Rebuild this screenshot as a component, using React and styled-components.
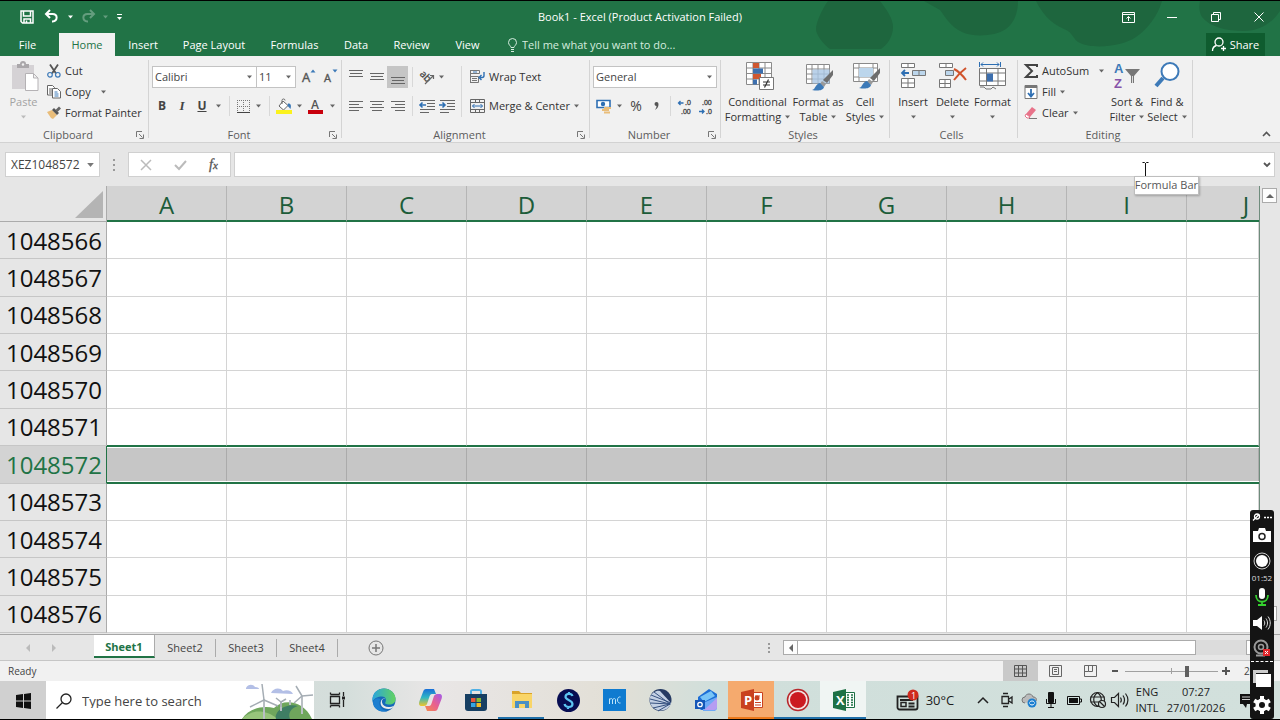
import { Fragment } from "react";
import styled, { createGlobalStyle, css } from "styled-components";

const GlobalStyle = createGlobalStyle`
  * {
    box-sizing: border-box;
  }
  body {
    margin: 0;
    background: #000;
    color: #444;
    font-family: "Open Sans", "Noto Sans", sans-serif;
    font-size: 11px;
    line-height: 14px;
  }
  button,
  input,
  select {
    margin: 0;
    padding: 0;
    border: 0;
    background: none;
    color: inherit;
    font: inherit;
    outline: none;
  }
  svg {
    display: block;
    flex: none;
    overflow: visible;
  }
`;

const Window = styled.div`
  position: relative;
  display: flex;
  flex-direction: column;
  min-height: 100vh;
  padding: 1px 0;
  overflow: hidden;
`;

/* ---------- title bar ---------- */

const Header = styled.header`
  position: relative;
  background: #217346;
  color: #fff;
`;

const Blots = styled.svg`
  position: absolute;
  top: 0;
  right: 0;
  overflow: hidden;
`;

const TitleBar = styled.div`
  position: relative;
  display: grid;
  grid-template-columns: 1fr auto 1fr;
  align-items: center;
  height: 32px;
`;

const QuickAccess = styled.div`
  display: flex;
  align-items: center;
  gap: 5px;
  padding-left: 20px;
`;

const PlainButton = styled.button`
  display: flex;
  align-items: center;
  justify-content: center;
  width: ${({ $w }) => ($w ? `${$w}px` : "auto")};
  height: ${({ $h = 22 }) => $h}px;
  opacity: ${({ $dim }) => ($dim ? 0.3 : 1)};
`;

const Title = styled.h1`
  margin: 0;
  font-size: 11px;
  font-weight: 400;
`;

const WindowButtons = styled.div`
  display: flex;
  justify-content: flex-end;
`;

const TabRow = styled.nav`
  position: relative;
  display: flex;
  height: 23px;
`;

const Tab = styled.button`
  width: ${({ $w }) => $w}px;
  height: 23px;
  margin: 0 ${({ $active }) => ($active ? 4 : 0)}px;
  background: ${({ $active }) => ($active ? "#f1f1f1" : "transparent")};
  color: ${({ $active }) => ($active ? "#217346" : "#fff")};
`;

const TellMe = styled.label`
  display: flex;
  align-items: center;
  gap: 5px;
  margin-left: 12px;
  color: #d5ecdf;
`;

const TellMeInput = styled.input`
  width: 170px;
  &::placeholder {
    color: #d5ecdf;
    opacity: 1;
  }
`;

const Share = styled.button`
  display: flex;
  align-items: center;
  justify-content: center;
  gap: 4px;
  width: 59px;
  margin: 0 15px 0 auto;
  background: #0f5c2f;
`;

/* ---------- ribbon ---------- */

const Ribbon = styled.section`
  position: relative;
  display: flex;
  height: 87px;
  padding-top: 4px;
  background: #f1f1f1;
  border-bottom: 1px solid #d2d2d2;
`;

const GroupBox = styled.div`
  display: flex;
  flex-direction: column;
  flex: none;
  width: ${({ $w }) => $w}px;
  margin-bottom: 4px;
  border-right: 1px solid #d4d4d4;
`;

const GroupBody = styled.div`
  display: flex;
  flex: none;
  height: 67px;
  padding-left: ${({ $pad = 4 }) => $pad}px;
`;

const GroupFoot = styled.div`
  display: flex;
  align-items: center;
  flex: none;
  height: 15px;
  padding-right: 4px;
  color: #5c5c5c;
  span {
    flex: 1;
    text-align: center;
  }
`;

const Stack = styled.div`
  display: flex;
  flex-direction: column;
  flex: none;
  gap: ${({ $gap = 0 }) => $gap}px;
  padding-top: ${({ $top = 0 }) => $top}px;
  width: ${({ $w }) => ($w ? `${$w}px` : "auto")};
`;

const Line = styled.div`
  display: flex;
  align-items: center;
  height: 22px;
`;

const SmallButton = styled.button`
  display: flex;
  align-items: center;
  gap: 4px;
  height: 21px;
  color: #333;
  white-space: nowrap;
`;

const Gap = styled.span`
  flex: none;
  width: ${({ $w }) => $w}px;
  margin-left: ${({ $push }) => ($push ? "auto" : 0)};
`;

const IconButton = styled.button`
  display: flex;
  align-items: center;
  justify-content: center;
  flex: none;
  width: ${({ $w = 20 }) => $w}px;
  height: 22px;
  background: ${({ $on }) => ($on ? "#c5c5c5" : "transparent")};
  font-size: ${({ $size = 12 }) => $size}px;
  ${({ $bold }) => $bold && css`font-weight: 700;`}
  ${({ $italic }) => $italic && css`font-style: italic; font-family: "Liberation Serif", serif;`}
  ${({ $underline }) => $underline && css`text-decoration: underline;`}
`;

const Divider = styled.span`
  flex: none;
  width: 1px;
  height: ${({ $h = 20 }) => $h}px;
  margin: 0 4px;
  background: #d8d8d8;
`;

const BigButton = styled.button`
  display: flex;
  flex-direction: column;
  flex: none;
  align-items: center;
  width: ${({ $w }) => $w}px;
  padding-top: 2px;
  color: ${({ $dim }) => ($dim ? "#a3a3a3" : "#333")};
  white-space: nowrap;
`;

const BigIcon = styled.span`
  display: flex;
  height: 32px;
  padding-left: ${({ $wide }) => ($wide ? 4 : 0)}px;
`;

const BigText = styled.span`
  display: flex;
  align-items: center;
  gap: 4px;
  height: 15px;
`;

const Combo = styled.label`
  display: flex;
  align-items: center;
  width: ${({ $w }) => $w}px;
  height: 22px;
  margin-right: ${({ $join }) => ($join ? -1 : 0)}px;
  padding: 0 4px 0 2px;
  background: #fff;
  border: 1px solid #c3c3c3;
`;

const Select = styled.select`
  flex: 1;
  min-width: 0;
  height: 20px;
  appearance: none;
`;

const Collapse = styled.button`
  margin: auto 9px 5px auto;
`;

/* ---------- formula bar ---------- */

const FormulaRow = styled.div`
  display: flex;
  align-items: center;
  height: 43px;
  padding: 0 5px;
  background: #e6e6e6;
`;

const NameBox = styled.label`
  display: flex;
  align-items: center;
  width: 95px;
  height: 25px;
  padding: 0 5px;
  background: #fff;
  border: 1px solid #d0d0d0;
  font-size: 12px;
`;

const NameInput = styled.input`
  flex: 1;
  min-width: 0;
`;

const FormulaButtons = styled.div`
  display: flex;
  align-items: center;
  width: 103px;
  height: 25px;
  margin: 0 3px 0 13px;
  background: #fff;
  border: 1px solid #d0d0d0;
`;

const FormulaField = styled.label`
  position: relative;
  display: flex;
  flex: 1;
  align-items: center;
  height: 25px;
  padding-right: 3px;
  background: #fff;
  border: 1px solid #d0d0d0;
`;

const FormulaInput = styled.input`
  flex: 1;
  height: 22px;
`;

const Cursor = styled.svg`
  position: absolute;
  top: 9px;
  right: 125px;
`;

const Tooltip = styled.span`
  position: absolute;
  top: 23px;
  right: 75px;
  padding: 1px 0 2px;
  background: #fff;
  border: 1px solid #bebebe;
  box-shadow: 1px 1px 2px rgba(0, 0, 0, 0.25);
  color: #575757;
  white-space: nowrap;
  z-index: 2;
`;

/* ---------- sheet ---------- */

const SheetArea = styled.main`
  display: flex;
  flex: 1;
  background: #e6e6e6;
  border-bottom: 1px solid #a6a6a6;
`;

const GridClip = styled.div`
  display: flex;
  flex: 1;
  min-width: 0;
  margin-bottom: 1px;
  overflow: hidden;
  border-right: 1px solid #6f8c7c;
`;

const Grid = styled.table`
  width: 100%;
  table-layout: fixed;
  border-collapse: separate;
  border-spacing: 0;
  background: #fff;
  color: #111;
  font-size: 24px;
  line-height: 30px;
`;

const Corner = styled.th`
  width: 107px;
  padding: 0 3px 3px 0;
  background: #e6e6e6;
  border-right: 1px solid #ababab;
  border-bottom: 1px solid #ababab;
  vertical-align: bottom;
  svg {
    margin-left: auto;
  }
`;

const ColHead = styled.th`
  width: ${({ $last }) => ($last ? "auto" : "120px")};
  height: 36px;
  padding: 4px 0 0 ${({ $last }) => ($last ? 46 : 0)}px;
  background: #d3d3d3;
  border-right: ${({ $last }) => ($last ? 0 : 1)}px solid #b5b5b5;
  border-bottom: 2px solid #217346;
  color: #1c5c39;
  font-weight: 400;
`;

const RowHead = styled.th`
  padding: 1px 4px 0 0;
  background: ${({ $on }) => ($on ? "#d3d3d3" : "#e6e6e6")};
  border-right: 1px solid ${({ $on }) => ($on ? "#217346" : "#ababab")};
  border-bottom: 1px solid #c6c6c6;
  color: ${({ $on }) => ($on ? "#217346" : "#111")};
  font-weight: 400;
  text-align: right;
`;

const Cell = styled.td`
  padding: 0;
  border-right: 1px solid #d4d4d4;
  border-bottom: 1px solid #d4d4d4;
  ${({ $on }) =>
    $on &&
    css`
      background: #c6c6c6;
      border-top: 1px solid #217346;
      border-right: 0;
      border-bottom: 2px solid #217346;
      box-shadow: inset 0 1px #fff, inset 0 -1px #fff, inset -1px 0 #ababab;
    `}
  ${({ $above }) => $above && css`border-bottom-color: #217346;`}
`;

const VScroll = styled.div`
  display: flex;
  flex-direction: column;
  justify-content: space-between;
  width: 20px;
  padding: 2px 3px 13px 2px;
`;

const ScrollButton = styled.button`
  display: flex;
  align-items: center;
  justify-content: center;
  flex: none;
  width: 15px;
  height: 15px;
  background: #fdfdfd;
  border: 1px solid #ababab;
`;

const SheetBar = styled.div`
  display: flex;
  align-items: center;
  height: 26px;
  background: #e6e6e6;
  border-bottom: 1px solid #c6c6c6;
`;

const TabNav = styled.div`
  display: flex;
  gap: 18px;
  width: 94px;
  padding-left: 24px;
`;

const SheetTab = styled.button`
  width: 61px;
  height: 18px;
  border-right: 1px solid #ababab;
  ${({ $active }) =>
    $active &&
    css`
      align-self: flex-start;
      height: 23px;
      padding-top: 2px;
      background: #fff;
      border-bottom: 2px solid #217346;
      color: #217346;
      font-weight: 700;
    `}
`;

const AddSheet = styled.button`
  margin-left: 30px;
`;

const HScroll = styled.div`
  display: flex;
  width: 478px;
  margin: 0 19px 0 13px;
  background: #dcdcdc;
`;

const HThumb = styled.div`
  width: 399px;
  height: 15px;
  margin: 0 auto 0 -1px;
  background: #fff;
  border: 1px solid #ababab;
`;

const StatusBar = styled.footer`
  display: flex;
  align-items: center;
  height: 20px;
  padding-left: 8px;
  background: #f1f1f1;
  font-size: 10px;
`;

const ViewButton = styled.button`
  display: flex;
  align-items: center;
  justify-content: center;
  width: 35px;
  height: 20px;
  background: ${({ $on }) => ($on ? "#c9c9c9" : "transparent")};
`;

const Zoom = styled.input`
  width: 93px;
  height: 16px;
  margin: 0 4px 0 3px;
  appearance: none;
  background: linear-gradient(#a0a0a0, #a0a0a0) center / 100% 1px no-repeat,
    linear-gradient(#a0a0a0, #a0a0a0) center / 1px 6px no-repeat;
  &::-webkit-slider-thumb {
    appearance: none;
    width: 4px;
    height: 11px;
    background: #5f5f5f;
  }
`;

const ZoomLevel = styled.span`
  width: 36px;
  margin-left: 14px;
`;

/* ---------- taskbar ---------- */

const Taskbar = styled.div`
  display: flex;
  align-items: stretch;
  height: 38px;
  background: linear-gradient(90deg, #d9d9d9 0, #d4dedb 27%, #e9e6e6 34%, #e2dfd6 48%, #d0dfdb 56%, #d2e0dc 100%);
  color: #1c1c1c;
`;

const StartButton = styled.button`
  display: flex;
  align-items: center;
  justify-content: center;
  width: 46px;
  padding-top: 1px;
  background: #d0d0d0;
`;

const SearchBox = styled.label`
  display: flex;
  align-items: center;
  width: 268px;
  padding: 1px 0 0 10px;
  background: #fff;
`;

const SearchInput = styled.input`
  flex: 1;
  min-width: 0;
  padding-left: 10px;
  font-size: 13px;
  &::placeholder {
    color: #444;
    opacity: 1;
  }
`;

const TaskButton = styled.button`
  display: flex;
  align-items: center;
  justify-content: center;
  width: 46px;
  padding: 2px 0 0 2px;
  background: ${({ $bg = "transparent" }) => $bg};
  border-bottom: 2px solid ${({ $bar = "transparent" }) => $bar};
`;

const Tray = styled.div`
  display: flex;
  align-items: center;
  margin-left: auto;
  padding-right: 26px;
`;

const TrayButton = styled.button`
  display: flex;
  align-items: center;
  justify-content: center;
  width: ${({ $w = 23 }) => $w}px;
  height: 30px;
`;

const TrayText = styled.div`
  width: ${({ $w }) => $w}px;
  font-size: ${({ $size = 11 }) => $size}px;
  line-height: 16px;
  text-align: center;
`;

const Recorder = styled.aside`
  position: absolute;
  right: 6px;
  bottom: 1px;
  display: flex;
  flex-direction: column;
  align-items: center;
  width: 24px;
  height: 209px;
  padding-top: 2px;
  background: #141414;
  border-radius: 3px;
  color: #fff;
`;

const RecorderButton = styled.button`
  display: flex;
  align-items: center;
  justify-content: center;
  flex: none;
  width: 24px;
  height: ${({ $h = 26 }) => $h}px;
`;

const RecorderTime = styled.span`
  color: #ddd;
  font-size: 8px;
  line-height: 10px;
`;

const RecorderLine = styled.span`
  width: 22px;
  border-top: 1px dashed #fff;
`;

/* ---------- icons ---------- */

const Caret = ({ color = "#666", size = 5 }) => (
  <svg width={size} height="4" viewBox="0 0 5 3">
    <path d="M0 0h5L2.5 3z" fill={color} />
  </svg>
);

const Launcher = () => (
  <svg width="8" height="8" fill="none" stroke="#777">
    <path d="M.5 6V.5H6M3 3l3.500 3.500M7.500 3.500v4h-4" />
  </svg>
);

const Lines = ({ rows, w = 14 }) => (
  <svg width={w} height="16" stroke="#666">
    {rows.map(([y, x1, x2]) => (
      <path key={y} d={`M${x1} ${y}.5H${x2}`} />
    ))}
  </svg>
);

const SaveIcon = () => (
  <svg width="14" height="14" fill="none" stroke="#fff" strokeWidth="1.500">
    <path d="M1 1h12v12H2.500L1 11.500zM3.500 1v5h7V1M4 13V9h6.500v4M6.500 10.500V13" />
  </svg>
);

const UndoIcon = ({ flip }) => (
  <svg width="15" height="14" fill="none" stroke="#fff" strokeWidth="2">
    <g transform={flip ? "translate(15 0) scale(-1 1)" : undefined}>
      <path d="M6 0L2 4l4 4M2 4h6.500c5.500 0 5.500 7 0 7.500H8" />
    </g>
  </svg>
);

const PasteIcon = () => (
  <svg width="27" height="29">
    <path d="M0 3h22v24H0z" fill="#d5d2d5" />
    <path d="M5 2h3a3 3 0 016 0h3v4H5z" fill="#aaa7aa" />
    <circle cx="11" cy="2.500" r="1.200" fill="#f1f1f1" />
    <path d="M13.500 11.500h8l4.500 4.500v12.500H13.500zM21.500 11.500V16H26" fill="#fff" stroke="#b5b2b5" />
  </svg>
);

const CutIcon = () => (
  <svg width="14" height="14" fill="none">
    <path d="M3 .5l6 9M11 .5l-6 9" stroke="#555" strokeWidth="1.800" />
    <circle cx="3" cy="10.800" r="2.300" stroke="#3d7ab8" strokeWidth="1.200" />
    <circle cx="10.800" cy="10.800" r="2.300" stroke="#3d7ab8" strokeWidth="1.200" />
  </svg>
);

const CopyIcon = () => (
  <svg width="14" height="14" fill="#fff" stroke="#666">
    <path d="M.5.5h5l2 2V10h-7zM2 4h3M2 6h3M2 8h3" />
    <path d="M5.500 3.500h5l3 3v6.500h-8z" />
    <path d="M7.500 7h3M7.500 9h4M7.500 11h4" stroke="#3d7ab8" />
  </svg>
);

const PainterIcon = () => (
  <svg width="14" height="14">
    <path d="M0 6l5-2 5 5-4 4-2-1z" fill="#e9bd7a" />
    <path d="M5 4l2-2 5 5-2 2z" fill="#555" />
    <path d="M8.500 4l3.500-3.500L14 2.500 10.500 6z" fill="#666" />
  </svg>
);

const FontSizeIcon = ({ up }) => (
  <svg width="14" height="14">
    <text x="0" y={up ? 12 : 12} fontSize={up ? 13 : 11} fill="#555" stroke="#555" strokeWidth=".4">A</text>
    <path d={up ? "M8.500 2.500h5L11-.5z" : "M8.500-.5h5L11 2.500z"} fill="#3d7ab8" />
  </svg>
);

const BordersIcon = () => (
  <svg width="13" height="13" fill="none" stroke="#777">
    <path d="M.5 0v12M6.500 0v12M12.500 0v12M0 .5h13M0 6.500h13" strokeDasharray="1 1" />
    <path d="M0 12.500h13" stroke="#444" />
  </svg>
);

const FillColorIcon = () => (
  <svg width="16" height="15">
    <path d="M7 2l5 4.500-4.500 4.500L3 7zM6 5V1.500a1.500 1.500 0 013 0" fill="#fff" stroke="#666" />
    <path d="M12 4.500c3 0 3.500 2 2.500 5.500-1-1-1.500-2-3-3z" fill="#3d7ab8" />
    <path d="M0 11h16v4H0z" fill="#fbf21d" />
  </svg>
);

const FontColorIcon = () => (
  <svg width="15" height="15">
    <text x="3" y="10" fontSize="12" fontWeight="600" fill="#555">A</text>
    <path d="M0 11h15v4H0z" fill="#c8000c" />
  </svg>
);

const OrientIcon = () => (
  <svg width="16" height="15">
    <text x="0" y="7" fontSize="10" fill="#444" stroke="#444" strokeWidth=".3" transform="rotate(45 3 6)">ab</text>
    <path d="M6 14L14.500 5.500M11 5.500h3.500V9" stroke="#666" strokeWidth="1.200" fill="none" />
  </svg>
);

const IndentIcon = ({ right }) => (
  <svg width="16" height="14" stroke="#666" fill="none">
    <path d="M1 1.500h15M8 4.500h8M8 7.500h8M1 10.500h15M1 13.500h9" />
    <path d={right ? "M0 6h5.500M3.500 3.500L6 6 3.500 8.500" : "M1.500 6H7M3.500 3.500L1 6l2.500 2.500"} stroke="#2e6fb3" strokeWidth="1.600" />
  </svg>
);

const WrapIcon = () => (
  <svg width="15" height="15" fill="none" stroke="#777">
    <path d="M.5 1v13M.5 1.500h9v3h-9M.5 7.500h8v6h-8M2 9.500h5M2 11.500h5" />
    <path d="M3 3h4" stroke="#3d7ab8" />
    <path d="M14 3v3.500c0 1-1 2-2 2h-2M11.500 6L9 8.500l2.500 2.500" stroke="#2e6fb3" strokeWidth="1.400" />
  </svg>
);

const MergeIcon = () => (
  <svg width="15" height="14" fill="none" stroke="#666">
    <path d="M.5.5h14v13H.5zM.5 3.500h14M.5 10.500h14M5.500.5v3M9.500.5v3M5.500 10.500v3M9.500 10.500v3" />
    <path d="M2.500 7h10M4.500 5L2.500 7l2 2M10.500 5l2 2-2 2" stroke="#2e6fb3" />
  </svg>
);

const CurrencyIcon = () => (
  <svg width="16" height="15">
    <path d="M1 1.500h13v7H1z" fill="#fff" stroke="#2e6fb3" strokeWidth="1.600" />
    <circle cx="7" cy="5" r="2.200" fill="#2e6fb3" />
    <path d="M8 8h7v2H8zM6 10h7v2H6zM8 12.500h6v2H8z" fill="#e9bd7a" />
  </svg>
);

const DecimalIcon = ({ more }) => (
  <svg width="15" height="15">
    <g fontFamily="Liberation Sans, sans-serif" fontSize="7" fill="#444" stroke="#444" strokeWidth=".3">
      <text x={more ? 7 : 3} y="6">{more ? ".0" : ".00"}</text>
      <text x={more ? 3 : 7} y="15">{more ? ".00" : ".0"}</text>
    </g>
    <path
      d={more ? "M.5 4h5M2.500 2l-2 2 2 2" : "M0 12.500h5M3 10.500l2 2-2 2"}
      fill="none"
      stroke="#2e6fb3"
      strokeWidth="1.300"
    />
  </svg>
);

const CondIcon = () => (
  <svg width="28" height="29">
    <path d="M.5.5h25v22H.5zM.5 6h25M.5 11.500h25M.5 17h25M7 .5v22M13 .5v22M19 .5v22" fill="#fff" stroke="#8a8a8a" />
    <path d="M7 1h6v5H7zM7 12h8v5H7z" fill="#cf5730" />
    <path d="M7 6.500h10v5H7zM7 17.500h4v5H7z" fill="#3d6fae" />
    <path d="M13.500 15.500h14v12h-14z" fill="#fff" stroke="#777" />
    <path d="M17 20h7M17 23h7M22.500 17.500l-4 8" stroke="#333" strokeWidth="1.200" />
  </svg>
);

const Brush = ({ x, y }) => (
  <g transform={`translate(${x} ${y})`}>
    <path d="M21 0v5l-6 8-4-3z" fill="#6e6e6e" />
    <path d="M10 11l4 3-2 3-4-3z" fill="#999" />
    <path d="M8 13l4 4c-1 4-7 4-12 3 4-1 3-6 8-7z" fill="#3d7ab8" />
  </g>
);

const TableIcon = () => (
  <svg width="28" height="29">
    <path d="M.5 2.500h23v19H.5zM.5 7h23M.5 12h23M.5 17h23M6 2.500v19M12 2.500v19M18 2.500v19" fill="#fff" stroke="#8a8a8a" />
    <path d="M6.500 7.500h17v14h-17z" fill="#a9c6e3" opacity=".8" />
    <Brush x={6} y={8} />
  </svg>
);

const CellStyleIcon = () => (
  <svg width="28" height="28">
    <path d="M.5 1.500h24v18H.5zM.5 6h24M.5 15h24M6 1.500v18M20 1.500v18" fill="#fff" stroke="#8a8a8a" />
    <path d="M6 6h14v9H6z" fill="#bcd6ec" />
    <Brush x={6} y={6} />
  </svg>
);

const InsertIcon = () => (
  <svg width="26" height="28" fill="#fff" stroke="#777">
    <path d="M1.500 1.500h13v4h-13zM8 1.500v4M1.500 16.500h13v9h-13zM8 16.500v9M1.500 21h13" />
    <path d="M12.500 8.500h13v5h-13zM19 8.500v5" fill="#bcd6ec" />
    <path d="M2 11h7M5 8l-3 3 3 3" fill="none" stroke="#2e6fb3" strokeWidth="1.800" />
  </svg>
);

const DeleteIcon = () => (
  <svg width="28" height="28" fill="#fff" stroke="#777">
    <path d="M.5 1.500h13v4H.5zM7 1.500v4M.5 17.500h11v8H.5zM6 17.500v8M.5 21.500h11" />
    <path d="M6.500 8.500h8v5h-8z" fill="#bcd6ec" />
    <path d="M15 7c4 2 9 7 12 11M27 6c-4 3-9 8-12 12" fill="none" stroke="#d0532c" strokeWidth="2" />
  </svg>
);

const FormatIcon = () => (
  <svg width="27" height="29" fill="#fff" stroke="#777">
    <path d="M.5 6.500h26v17H.5zM.5 11h26M.5 19h26M7.500 6.500v17M19 6.500v17" />
    <path d="M8 11.500h6v8H8z" fill="#3d6fae" stroke="none" />
    <path d="M1 25h4l2 2h5l2-2 3 2" fill="none" />
    <path d="M.5 0v5M21.500 0v5M2 2.500h18M4 .5l-2 2 2 2M18 .5l2 2-2 2" fill="none" stroke="#2e6fb3" />
  </svg>
);

const SortIcon = () => (
  <svg width="28" height="28">
    <g fontFamily="Liberation Sans, sans-serif" fontSize="13" fontWeight="700">
      <text x="1" y="11" fill="#3d7ab8">A</text>
      <text x="1" y="26" fill="#8653a8">Z</text>
    </g>
    <path d="M12 7h15l-6 7v7h-3v-7z" fill="#777" />
    <path d="M19.500 14v7" stroke="#ddd" />
  </svg>
);

const FindIcon = () => (
  <svg width="26" height="28" fill="none" stroke="#3d7ab8">
    <path d="M9 16L2 24" strokeWidth="4" />
    <circle cx="16" cy="9.500" r="8.500" fill="#fff" strokeWidth="2" />
  </svg>
);

const SigmaIcon = () => (
  <svg width="14" height="14" fill="none" stroke="#444" strokeWidth="2">
    <path d="M13 3V1H2l6 6-6 6h11v-2" />
  </svg>
);

const FillIcon = () => (
  <svg width="14" height="14" fill="none">
    <path d="M1 .5h12v13H1z" fill="#fff" stroke="#777" />
    <path d="M1 2h12" stroke="#777" strokeWidth="2" />
    <path d="M7 4v7M4 8l3 3.500L10 8" stroke="#2e6fb3" strokeWidth="1.800" />
  </svg>
);

const EraserIcon = () => (
  <svg width="14" height="13">
    <path d="M2 8l6-7 4 3-6 7z" fill="#e8738a" />
    <path d="M2 8l4 3-1 1H3L1 10z" fill="#fff" stroke="#e8738a" />
    <path d="M5 12.500h8" stroke="#777" />
  </svg>
);

const EdgeIcon = () => (
  <svg width="24" height="24" viewBox="0 0 24 24">
    <defs>
      <linearGradient id="edgeTop" x1="0" x2="1">
        <stop offset="0" stopColor="#2aa5dd" />
        <stop offset="1" stopColor="#62d35f" />
      </linearGradient>
    </defs>
    <circle cx="12" cy="12" r="11.500" fill="#1668b8" />
    <path d="M.5 11C1 4 6 .5 12 .5S23.500 5 23.500 11c0 4-3 5.500-6 5.500-4 0-5-1-4-2.500 1-2 .5-5.500-3.500-5.500S2 10 .5 14z" fill="url(#edgeTop)" />
    <path d="M8.500 11c-3 5 0 11.500 7 12-8 2-14-2-14.500-8 .5-4 4-6 7.500-4z" fill="#1c7fd0" />
    <path d="M13 10.500c-2.500 0-3.500 2-3 4 1 4.500 6.500 6 12.500 3-1.500 2.500-3.500 3.500-6 3.500-6 0-9-4-7.500-8 1-2 2.500-3 4-2.500z" fill="#e9eaec" />
  </svg>
);

const CopilotIcon = () => (
  <svg width="23" height="22" viewBox="0 0 23 22">
    <defs>
      <linearGradient id="pilotLeft" x1="0" y1="0" x2="0" y2="1">
        <stop offset="0" stopColor="#1a6fd8" />
        <stop offset=".5" stopColor="#2fb6c4" />
        <stop offset="1" stopColor="#f1c52a" />
      </linearGradient>
      <linearGradient id="pilotRight" x1="1" y1="0" x2="0" y2="1">
        <stop offset="0" stopColor="#a45bea" />
        <stop offset=".5" stopColor="#e8608f" />
        <stop offset="1" stopColor="#f58a4c" />
      </linearGradient>
    </defs>
    <path d="M7 0h8l2 5h-4c-1.500 0-2 1-2.500 2.500L8 15c-.5 1-1.500 2-3 2H3c-3 0-3.500-2-2.500-5L4 3c.5-2 1.500-3 3-3z" fill="url(#pilotLeft)" />
    <path d="M16 22H8l-2-5h4c1.500 0 2-1 2.500-2.500L15 7c.5-1 1.500-2 3-2h2c3 0 3.500 2 2.500 5L19 19c-.5 2-1.500 3-3 3z" fill="url(#pilotRight)" />
  </svg>
);

const StoreIcon = () => (
  <svg width="22" height="23">
    <path d="M6 6V2.500C6 1 6.500 1 8 1h6c1.500 0 2 0 2 1.500V6" fill="none" stroke="#4fb0e5" strokeWidth="2" />
    <path d="M0 5h22v14a3 3 0 01-3 3H3a3 3 0 01-3-3z" fill="#173f63" />
    <path d="M6 9h4.500v4H6z" fill="#e9573a" />
    <path d="M11.500 9H16v4h-4.500z" fill="#86bc34" />
    <path d="M6 14h4.500v4H6z" fill="#35a5e5" />
    <path d="M11.500 14H16v4h-4.500z" fill="#f2bb26" />
  </svg>
);

const FolderIcon = () => (
  <svg width="22" height="20">
    <path d="M1 1h7l2 2h11v15H1z" fill="#d9a32a" />
    <path d="M1 4h20v14H1z" fill="#f9d568" />
    <path d="M4 18v-7h14v7h-4v-4H8v4z" fill="#4a8fc4" />
  </svg>
);

const SIcon = () => (
  <svg width="23" height="23">
    <circle cx="11.500" cy="11.500" r="11.500" fill="#070d52" />
    <path d="M15.500 7c-1-3-7-3-7 1 0 3 7 3 7 7 0 4-7 4-8 0M12 3v3M11 17v3" fill="none" stroke="#5cc4f2" strokeWidth="2.200" />
  </svg>
);

const McIcon = () => (
  <svg width="23" height="22">
    <path d="M0 0h23v22H0z" fill="#0f7bd0" />
    <path d="M6.500 15V9.500M6.500 11c1-2 3-2 3 0v4M9.500 11c1-2 3-2 3 0v4M17.500 8c-4-1-4 7 0 6" fill="none" stroke="#bfe6fa" />
  </svg>
);

const BallIcon = () => (
  <svg width="23" height="22">
    <circle cx="11.500" cy="11" r="11" fill="#253a63" />
    <path d="M1 8C3 3 8 1 11 2l11 12c-1 3-3 6-7 7C7 23-1 17 1 8z" fill="#c3d0e4" />
    <path d="M2 6l20 8M1 10l20 5M1 14l20 1M5 3l16 12M4 19l17-4M9 22l12-7" stroke="#35507f" />
  </svg>
);

const OutlookIcon = () => (
  <svg width="23" height="22">
    <path d="M3 8L14 0l8 5v14l-2 2H6l-3-3z" fill="#1d6fd6" />
    <path d="M5 8l11-6 4 5-11 6z" fill="#78c4f7" />
    <path d="M8 14l14-6v12l-2 2H8z" fill="#6ea9f5" />
    <path d="M22 9L9 21h10c2 0 3-1 3-3z" fill="#b59df2" />
    <path d="M0 11h10v9H0z" fill="#1557b8" />
    <circle cx="5" cy="15.500" r="2.200" fill="none" stroke="#fff" strokeWidth="1.300" />
  </svg>
);

const OfficeIcon = ({ color, letter, children }) => (
  <svg width="22" height="22">
    <path d="M11 3.500h10.500v15H11z" fill="#fff" stroke={color} />
    {children}
    <path d="M0 3l13-3v22L0 19z" fill={color} />
    <text x="3" y="16" fontSize="13" fontWeight="700" fill="#fff">{letter}</text>
  </svg>
);

const Windmills = () => (
  <svg width="72" height="36">
    <path d="M4 5c2-4 7-4 9-1 3 0 4 1 4 2H4zM29 10c2-5 9-6 12-2 4-2 9 0 10 3z" fill="#b3bfe6" />
    <path d="M0 36c6-10 20-14 32-11 10-10 30-7 38 11z" fill="#6fa65c" />
    <path d="M0 36c8-9 22-11 36 0z" fill="#97c47b" />
    <path d="M34 36c-2-8 10-16 22-13-8 2-10 8-8 13z" fill="#3f7e64" />
    <path d="M22 16v20M39 19v9M60 13v18M48 17v5" stroke="#b9bfc4" strokeWidth="2" />
    <path d="M22 17L20 1M22 17L8 24M22 17l14 6M60 13l-6-10M60 13l11-1M60 13l-8 7M39 19l-5-4M39 19l5-3M39 19v5" stroke="#a5adb4" strokeWidth="1.500" />
  </svg>
);

const GearIcon = () => (
  <svg width="20" height="20" viewBox="0 0 20 20">
    <g stroke="#fff" strokeWidth="4">
      <path d="M10 1v18M2.200 5.500l15.600 9M2.200 14.500l15.600-9" />
    </g>
    <circle cx="10" cy="10" r="6.500" fill="#fff" />
    <circle cx="10" cy="10" r="3" fill="#141414" />
  </svg>
);

/* ---------- parts ---------- */

const Group = ({ name, width, pad, launcher, children }) => (
  <GroupBox $w={width}>
    <GroupBody $pad={pad}>{children}</GroupBody>
    <GroupFoot>
      <span>{name}</span>
      {launcher && (
        <button aria-label={`${name} settings`}>
          <Launcher />
        </button>
      )}
    </GroupFoot>
  </GroupBox>
);

const Big = ({ icon, top, bottom, width, dim, wide }) => (
  <BigButton $w={width} $dim={dim}>
    <BigIcon $wide={wide}>{icon}</BigIcon>
    <BigText>{top}</BigText>
    <BigText>
      {bottom}
      <Caret color={dim ? "#bbb" : "#666"} />
    </BigText>
  </BigButton>
);

const tabs = [
  ["File", 55],
  ["Home", 56],
  ["Insert", 48],
  ["Page Layout", 94],
  ["Formulas", 67],
  ["Data", 56],
  ["Review", 55],
  ["View", 57],
];

const columns = ["A", "B", "C", "D", "E", "F", "G", "H", "I", "J"];
const rows = Array.from({ length: 11 }, (_, i) => 1048566 + i);
const selectedRow = 1048572;
const sheets = ["Sheet1", "Sheet2", "Sheet3", "Sheet4"];

const Head = () => (
  <Header>
    <Blots width="480" height="55" fill="#1e663e">
      <path d="M28 0h52c6 8 13 17 13 26 0 10-6 18-12 22H30c-6-4-14-14-14-20S22 8 28 0z" />
      <path d="M124 0h94c0 12-4 22-12 28-12 8-34 8-44 3-12-6-16-14-22-22z" />
      <path d="M236 0h126c-4 14-14 28-26 36-14 10-44 12-56 6-8-4-6-10-16-14-14-6-22-16-28-28z" />
      <path d="M400 0h80v10c-8 12-20 20-36 20-18 0-34-4-42-14-3-5-3-10-2-16z" />
    </Blots>
    <TitleBar>
      <QuickAccess>
        <PlainButton $w={14} aria-label="Save"><SaveIcon /></PlainButton>
        <PlainButton $w={24} aria-label="Undo"><UndoIcon /></PlainButton>
        <PlainButton $w={5} aria-label="Undo list"><Caret color="#fff" /></PlainButton>
        <PlainButton $w={20} $dim aria-label="Redo"><UndoIcon flip /></PlainButton>
        <PlainButton $w={5} $dim aria-label="Redo list"><Caret color="#fff" /></PlainButton>
        <PlainButton $w={12} aria-label="Customize toolbar">
          <svg width="5" height="6"><path d="M0 .5h5" stroke="#fff" /><path d="M0 3h5L2.500 6z" fill="#fff" /></svg>
        </PlainButton>
      </QuickAccess>
      <Title>Book1 - Excel (Product Activation Failed)</Title>
      <WindowButtons>
        <PlainButton $w={43} aria-label="Ribbon display options">
          <svg width="13" height="11" fill="none" stroke="#fff">
            <path d="M.5.500h12v10H.5zM.5 2.500h12M6.500 9V4.500M4.500 6.500l2-2 2 2" />
          </svg>
        </PlainButton>
        <PlainButton $w={44} aria-label="Minimize">
          <svg width="10" height="1"><path d="M0 .5h10" stroke="#fff" /></svg>
        </PlainButton>
        <PlainButton $w={43} aria-label="Restore">
          <svg width="10" height="10" fill="none" stroke="#fff"><path d="M.5 2.500h7v7h-7zM2.500 2.500v-2h7v7h-2" /></svg>
        </PlainButton>
        <PlainButton $w={43} aria-label="Close">
          <svg width="10" height="10" stroke="#fff"><path d="M.5.5l9 9M9.500.5l-9 9" /></svg>
        </PlainButton>
      </WindowButtons>
    </TitleBar>
    <TabRow>
      {tabs.map(([name, w]) => (
        <Tab key={name} $w={w} $active={name === "Home"}>{name}</Tab>
      ))}
      <TellMe>
        <svg width="9" height="14" fill="none" stroke="#d5ecdf">
          <path d="M3 9.500C3 8 .5 7 .5 4.500a4 4 0 018 0C8.500 7 6 8 6 9.500zM3 11.500h3M3 13.500h3" />
        </svg>
        <TellMeInput aria-label="Tell me" placeholder="Tell me what you want to do..." />
      </TellMe>
      <Share>
        <svg width="14" height="15" fill="none" stroke="#fff" strokeWidth="1.300">
          <circle cx="7" cy="5" r="4" />
          <path d="M.5 14c0-3 2-5 4-5.500M11.500 9v5M9 11.500h5" />
        </svg>
        Share
      </Share>
    </TabRow>
  </Header>
);

const RibbonBar = () => (
  <Ribbon>
    <Group name="Clipboard" width={149} pad={0} launcher>
      <Big icon={<PasteIcon />} top="Paste" width={47} dim wide />
      <Stack>
        <SmallButton><CutIcon />Cut</SmallButton>
        <SmallButton><CopyIcon />Copy<Gap $w={2} /><Caret /></SmallButton>
        <SmallButton><PainterIcon />Format Painter</SmallButton>
      </Stack>
    </Group>
    <Group name="Font" width={193} pad={3} launcher>
      <Stack $top={6} $gap={7}>
        <Line>
          <Combo $w={105} $join>
            <Select aria-label="Font"><option>Calibri</option></Select>
            <Caret />
          </Combo>
          <Combo $w={40}>
            <Select aria-label="Font size"><option>11</option></Select>
            <Caret />
          </Combo>
          <IconButton $w={26} aria-label="Increase font size"><FontSizeIcon up /></IconButton>
          <IconButton $w={18} aria-label="Decrease font size"><FontSizeIcon /></IconButton>
        </Line>
        <Line>
          <IconButton $bold>B</IconButton>
          <IconButton $bold $italic $size={13}>I</IconButton>
          <IconButton $bold $underline>U</IconButton>
          <IconButton $w={13} aria-label="Underline styles"><Caret /></IconButton>
          <Divider />
          <IconButton $w={18} aria-label="Borders"><BordersIcon /></IconButton>
          <IconButton $w={13} aria-label="Border styles"><Caret /></IconButton>
          <Divider />
          <IconButton $w={20} aria-label="Fill color"><FillColorIcon /></IconButton>
          <IconButton $w={11} aria-label="Fill colors"><Caret /></IconButton>
          <IconButton $w={21} aria-label="Font color"><FontColorIcon /></IconButton>
          <IconButton $w={12} aria-label="Font colors"><Caret /></IconButton>
        </Line>
      </Stack>
    </Group>
    <Group name="Alignment" width={248} pad={3} launcher>
      <Stack $top={6} $gap={7}>
        <Line>
          <IconButton $w={21} aria-label="Top align"><Lines rows={[[1, 0, 14], [4, 1, 13], [7, 0, 14]]} /></IconButton>
          <IconButton $w={21} aria-label="Middle align"><Lines rows={[[4, 0, 14], [7, 1, 13], [10, 0, 14]]} /></IconButton>
          <IconButton $w={21} $on aria-label="Bottom align"><Lines rows={[[8, 0, 14], [11, 1, 13], [14, 0, 14]]} /></IconButton>
          <Divider />
          <IconButton $w={20} aria-label="Orientation"><OrientIcon /></IconButton>
          <IconButton $w={9} aria-label="Orientations"><Caret /></IconButton>
        </Line>
        <Line>
          <IconButton $w={21} aria-label="Align left"><Lines rows={[[3, 0, 14], [6, 0, 10], [9, 0, 14], [12, 0, 10]]} /></IconButton>
          <IconButton $w={21} aria-label="Center"><Lines rows={[[3, 0, 14], [6, 2, 12], [9, 0, 14], [12, 2, 12]]} /></IconButton>
          <IconButton $w={21} aria-label="Align right"><Lines rows={[[3, 0, 14], [6, 4, 14], [9, 0, 14], [12, 4, 14]]} /></IconButton>
          <Divider />
          <IconButton aria-label="Decrease indent"><IndentIcon /></IconButton>
          <IconButton aria-label="Increase indent"><IndentIcon right /></IconButton>
        </Line>
      </Stack>
      <Stack $top={6}><Divider $h={51} /></Stack>
      <Stack $top={6} $gap={8}>
        <SmallButton><Gap $w={0} /><WrapIcon />Wrap Text</SmallButton>
        <SmallButton><Gap $w={0} /><MergeIcon />Merge &amp; Center<Caret /></SmallButton>
      </Stack>
    </Group>
    <Group name="Number" width={131} pad={3} launcher>
      <Stack $top={6} $gap={7}>
        <Combo $w={124}>
          <Select aria-label="Number format"><option>General</option></Select>
          <Caret />
        </Combo>
        <Line>
          <IconButton $w={21} aria-label="Accounting format"><CurrencyIcon /></IconButton>
          <IconButton $w={11} aria-label="Currencies"><Caret /></IconButton>
          <IconButton $w={22} $size={14}>%</IconButton>
          <IconButton $w={19} aria-label="Comma style">
            <svg width="5" height="8"><path d="M.5 2a2 2 0 114 0c0 3-1 4.500-3.500 6 1-2 1.500-3 1.500-4A2 2 0 01.5 2z" fill="#555" /></svg>
          </IconButton>
          <Divider />
          <IconButton $w={20} aria-label="Increase decimal"><DecimalIcon more /></IconButton>
          <IconButton $w={22} aria-label="Decrease decimal"><DecimalIcon /></IconButton>
        </Line>
      </Stack>
    </Group>
    <Group name="Styles" width={169} pad={3}>
      <Big icon={<CondIcon />} top="Conditional" bottom="Formatting" width={67} wide />
      <Big icon={<TableIcon />} top="Format as" bottom="Table" width={54} wide />
      <Big icon={<CellStyleIcon />} top="Cell" bottom="Styles" width={40} wide />
    </Group>
    <Group name="Cells" width={128} pad={3}>
      <Big icon={<InsertIcon />} top="Insert" width={40} />
      <Big icon={<DeleteIcon />} top="Delete" width={39} />
      <Big icon={<FormatIcon />} top="Format" width={41} />
    </Group>
    <Group name="Editing" width={175} pad={6}>
      <Stack $w={83}>
        <SmallButton><SigmaIcon />AutoSum<Gap $w={2} /><Caret /></SmallButton>
        <SmallButton><FillIcon />Fill<Caret /></SmallButton>
        <SmallButton><EraserIcon />Clear<Caret /></SmallButton>
      </Stack>
      <Big icon={<SortIcon />} top="Sort &amp;" bottom="Filter" width={40} />
      <Big icon={<FindIcon />} top="Find &amp;" bottom="Select" width={40} />
    </Group>
    <Collapse aria-label="Collapse ribbon">
      <svg width="9" height="6" fill="none" stroke="#555" strokeWidth="1.600"><path d="M1 5l3.500-3.500L8 5" /></svg>
    </Collapse>
  </Ribbon>
);

const FormulaBar = () => (
  <FormulaRow>
    <NameBox>
      <NameInput aria-label="Name box" defaultValue="XEZ1048572" />
      <Caret size={7} color="#777" />
    </NameBox>
    <Gap $w={13} />
    <svg width="2" height="12" fill="#999"><path d="M0 0h2v2H0zM0 5h2v2H0zM0 10h2v2H0z" /></svg>
    <FormulaButtons>
      <PlainButton $w={34} aria-label="Cancel">
        <svg width="10" height="10" stroke="#bbb" strokeWidth="1.500"><path d="M0 0l10 10M10 0L0 10" /></svg>
      </PlainButton>
      <PlainButton $w={34} aria-label="Enter">
        <svg width="13" height="10" fill="none" stroke="#bbb" strokeWidth="2"><path d="M1 5l4 4 7-8" /></svg>
      </PlainButton>
      <PlainButton $w={33} aria-label="Insert function">
        <svg width="14" height="16" fontFamily="Liberation Serif, serif" fontStyle="italic" fill="#555" stroke="#555" strokeWidth=".3">
          <text y="12" fontSize="14"><tspan x="2">f</tspan><tspan fontSize="11">x</tspan></text>
        </svg>
      </PlainButton>
    </FormulaButtons>
    <FormulaField>
      <FormulaInput aria-label="Formula bar" />
      <svg width="8" height="6" fill="none" stroke="#555" strokeWidth="1.800"><path d="M1 1l3 3 3-3" /></svg>
      <Cursor width="7" height="15" stroke="#111" fill="none"><path d="M.5.500h2l1 1 1-1h2M3.500 1v13M.5 14.500h2l1-1 1 1h2" /></Cursor>
      <Tooltip>Formula Bar</Tooltip>
    </FormulaField>
  </FormulaRow>
);

const Sheet = () => (
  <SheetArea>
    <GridClip>
      <Grid>
        <thead>
          <tr>
            <Corner aria-label="Select all">
              <svg width="28" height="27"><path d="M28 0v27H0z" fill="#b4b4b4" /></svg>
            </Corner>
            {columns.map((c) => (
              <ColHead key={c} $last={c === "J"}>{c}</ColHead>
            ))}
          </tr>
        </thead>
        <tbody>
          {rows.map((r) => (
            <tr key={r}>
              <RowHead $on={r === selectedRow}>{r}</RowHead>
              {columns.map((c) => (
                <Cell key={c} $on={r === selectedRow} $above={r === selectedRow - 1} />
              ))}
            </tr>
          ))}
        </tbody>
      </Grid>
    </GridClip>
    <VScroll>
      <ScrollButton aria-label="Scroll up"><svg width="8" height="4"><path d="M0 4h8L4 0z" fill="#666" /></svg></ScrollButton>
      <ScrollButton aria-label="Scroll down"><svg width="8" height="4"><path d="M0 0h8L4 4z" fill="#666" /></svg></ScrollButton>
    </VScroll>
  </SheetArea>
);

const SheetTabs = () => (
  <SheetBar>
    <TabNav>
      <PlainButton $w={8} aria-label="Previous sheet"><svg width="4" height="8"><path d="M4 0v8L0 4z" fill="#bbb" /></svg></PlainButton>
      <PlainButton $w={8} aria-label="Next sheet"><svg width="4" height="8"><path d="M0 0v8l4-4z" fill="#bbb" /></svg></PlainButton>
    </TabNav>
    {sheets.map((s, i) => (
      <SheetTab key={s} $active={i === 0}>{s}</SheetTab>
    ))}
    <AddSheet aria-label="New sheet">
      <svg width="16" height="16" fill="none" stroke="#777">
        <circle cx="8" cy="8" r="7" />
        <path d="M8 4v8M4 8h8" strokeWidth="1.500" />
      </svg>
    </AddSheet>
    <Gap $push $w={2}>
      <svg width="2" height="10" fill="#999"><path d="M0 0h2v2H0zM0 4h2v2H0zM0 8h2v2H0z" /></svg>
    </Gap>
    <HScroll>
      <ScrollButton aria-label="Scroll left"><svg width="4" height="8"><path d="M4 0v8L0 4z" fill="#666" /></svg></ScrollButton>
      <HThumb />
      <ScrollButton aria-label="Scroll right"><svg width="4" height="8"><path d="M0 0v8l4-4z" fill="#666" /></svg></ScrollButton>
    </HScroll>
  </SheetBar>
);

const Status = () => (
  <StatusBar>
    Ready
    <Gap $push $w={0} />
    <ViewButton $on aria-label="Normal view">
      <svg width="13" height="12" fill="none" stroke="#555"><path d="M.5.500h12v11H.5zM.5 4h12M.5 8h12M4.500.500v11M8.500.500v11" /></svg>
    </ViewButton>
    <ViewButton aria-label="Page layout view">
      <svg width="13" height="12" fill="none" stroke="#666"><path d="M.5.500h12v11H.5zM3.500 2.500h6v7h-6zM5 4.500h3M5 6.500h3" /></svg>
    </ViewButton>
    <ViewButton aria-label="Page break view">
      <svg width="13" height="12" fill="none" stroke="#666"><path d="M.5.500h12v11H.5zM4.500.500v6h-4M8.500.500v6h-4" /></svg>
    </ViewButton>
    <PlainButton $w={14} $h={18} aria-label="Zoom out"><svg width="6" height="2"><path d="M0 0h6v2H0z" fill="#555" /></svg></PlainButton>
    <Zoom type="range" aria-label="Zoom" min="0" max="100" defaultValue="67" />
    <PlainButton $w={8} $h={18} aria-label="Zoom in"><svg width="8" height="8"><path d="M0 3h3V0h2v3h3v2H5v3H3V5H0z" fill="#555" /></svg></PlainButton>
    <ZoomLevel>200%</ZoomLevel>
  </StatusBar>
);

const apps = [
  { name: "Microsoft Edge", icon: <EdgeIcon /> },
  { name: "Copilot", icon: <CopilotIcon /> },
  { name: "Microsoft Store", icon: <StoreIcon /> },
  { name: "File Explorer", icon: <FolderIcon />, bar: "#1f6fa8" },
  { name: "S", icon: <SIcon /> },
  { name: "mC", icon: <McIcon /> },
  { name: "Browser", icon: <BallIcon /> },
  { name: "Outlook", icon: <OutlookIcon /> },
  {
    name: "PowerPoint",
    bg: "#f5aa6e",
    bar: "#ec7a1c",
    icon: (
      <OfficeIcon color="#c9411f" letter="P">
        <path d="M14 7h5M14 13.500h6M14 16h6" stroke="#c9411f" />
        <circle cx="16" cy="9" r="2.500" fill="#c9411f" />
      </OfficeIcon>
    ),
  },
  {
    name: "Recorder",
    bar: "#1f6fa8",
    icon: (
      <svg width="24" height="24">
        <circle cx="12" cy="12" r="10.500" fill="#f3e4e2" stroke="#b8282c" strokeWidth="1.500" />
        <circle cx="12" cy="12" r="8" fill="#cb1a20" />
      </svg>
    ),
  },
  {
    name: "Excel",
    bg: "#f0f5f3",
    bar: "#1f6fa8",
    icon: (
      <OfficeIcon color="#1e7145" letter="X">
        <path d="M14 6h2M18 6h2M14 8.500h2M18 8.500h2M14 11h2M18 11h2M14 13.500h2M18 13.500h2M14 16h2M18 16h2" stroke="#1e7145" strokeWidth="1.500" />
      </OfficeIcon>
    ),
  },
];

const TaskbarRow = () => (
  <Taskbar>
    <StartButton aria-label="Start">
      <svg width="15" height="16"><path d="M0 2l7-1v6.500H0zM8 1l7-1v7.500H8zM0 8.500h7V15l-7-1zM8 8.500h7V16l-7-1z" fill="#111" /></svg>
    </StartButton>
    <SearchBox>
      <svg width="16" height="16" fill="none" stroke="#222" strokeWidth="1.300"><circle cx="10" cy="6" r="5" /><path d="M6.500 9.500L.5 15.500" /></svg>
      <SearchInput aria-label="Search" placeholder="Type here to search" />
      <Windmills />
    </SearchBox>
    <TaskButton aria-label="Task view">
      <svg width="16" height="16" fill="none" stroke="#222" strokeWidth="1.300"><path d="M.5 4.500h9v7h-9zM.5 2.500v-2M9.500 2.500H.5M.5 13.500h9M.5 15.500v-2M9.500 2.500v-2M9.500 15.500v-2M13.500 0v4M13.500 8v7" /><path d="M12 4.500h3v3h-3z" fill="#222" stroke="none" /></svg>
    </TaskButton>
    {apps.map(({ name, icon, bg, bar }) => (
      <TaskButton key={name} aria-label={name} $bg={bg} $bar={bar}>{icon}</TaskButton>
    ))}
    <Tray>
      <TrayButton $w={26} aria-label="News">
        <svg width="24" height="22">
          <path d="M1.500 7.500h20v11a2 2 0 01-2 2h-16a2 2 0 01-2-2zM4 11h13M12.500 14.500h6M12.500 17.500h6" fill="none" stroke="#222" strokeWidth="1.800" />
          <path d="M5 13.500h5v4H5z" fill="none" stroke="#222" strokeWidth="1.500" />
          <circle cx="17" cy="6" r="5.500" fill="#cf2a1e" />
          <text x="15" y="10" fontSize="9" fill="#fff">1</text>
        </svg>
      </TrayButton>
      <TrayText $w={38} $size={13}>30°C</TrayText>
      <Gap $w={9} />
      <TrayButton $w={30} aria-label="Hidden icons">
        <svg width="12" height="7" fill="none" stroke="#222" strokeWidth="1.500"><path d="M1 6l5-5 5 5" /></svg>
      </TrayButton>
      <TrayButton $w={18} aria-label="Meet now">
        <svg width="12" height="16" fill="none" stroke="#222" strokeWidth="1.300"><path d="M1 4.500h6.500v7H1zM8 7l3-2v6L8 9M2 1.500h5M2 14.500h5" /></svg>
      </TrayButton>
      <TrayButton $w={26} aria-label="OneDrive">
        <svg width="17" height="15">
          <path d="M4 10a3 3 0 010-6c1-4 7-4 8 0 3 0 4 2 3 4" fill="#bbb" stroke="#777" />
          <circle cx="11" cy="10" r="4.500" fill="#1b7fd0" />
          <path d="M8.500 9.500c1-2 4-2 5 0M13.500 10.500c-1 2-4 2-5 0" stroke="#fff" fill="none" />
        </svg>
      </TrayButton>
      <TrayButton $w={18} aria-label="Microphone">
        <svg width="10" height="16"><rect x="2" width="6" height="11" rx="1" fill="#111" /><path d="M.500 7v4.500h9V7M5 12v3M2 15.500h6" fill="none" stroke="#111" /></svg>
      </TrayButton>
      <TrayButton $w={28} aria-label="Battery">
        <svg width="15" height="9"><path d="M.5.500h12v8H.5zM13 3h1.500v3H13" fill="none" stroke="#111" /><path d="M2 2h9v5H2z" fill="#111" /></svg>
      </TrayButton>
      <TrayButton $w={20} aria-label="Network">
        <svg width="16" height="16" fill="none" stroke="#222" strokeWidth="1.200">
          <circle cx="7.500" cy="7.500" r="7" /><path d="M.5 5h14M.5 10h14M7.500.5c-5 4-5 10 0 14M7.500.5c5 4 5 10 0 14" />
          <circle cx="12" cy="12" r="3.500" fill="#d2e0dc" /><path d="M9.500 9.500l5 5" />
        </svg>
      </TrayButton>
      <TrayButton $w={23} aria-label="Volume">
        <svg width="17" height="14" fill="none" stroke="#222" strokeWidth="1.200"><path d="M.5 4.500h3l4-4v13l-4-4h-3zM9.500 4.500c1 1.500 1 3.500 0 5M12 2.500c2 3 2 6 0 9M14.500.5c3 4 3 9 0 13" /></svg>
      </TrayButton>
      <TrayText $w={32}>ENG<br />INTL</TrayText>
      <TrayText $w={66}>07:27<br />27/01/2026</TrayText>
      <Gap $w={11} />
      <svg width="14" height="15"><path d="M0 1h14v10H7l-1 4-3-4H0z" fill="#111" /><path d="M2 4h9M2 6.500h9" stroke="#ccc" /></svg>
    </Tray>
  </Taskbar>
);

const RecorderPanel = () => (
  <Recorder>
    <RecorderButton $h={10} aria-label="Pin">
      <svg width="20" height="8" fill="none" stroke="#fff" strokeWidth="1.300"><circle cx="5" cy="3.500" r="2.500" /><path d="M1 7.500l6-6M12 4.500h2M15 4.500h2M18 4.500h2" /></svg>
    </RecorderButton>
    <RecorderButton aria-label="Screenshot">
      <svg width="18" height="15"><path d="M0 3h5l1-3h6l1 3h5v11H0z" fill="#fff" /><circle cx="9" cy="8.500" r="3" fill="none" stroke="#222" strokeWidth="1.500" /></svg>
    </RecorderButton>
    <RecorderButton $h={25} aria-label="Record">
      <svg width="18" height="18"><circle cx="9" cy="9" r="8" fill="none" stroke="#ccc" /><circle cx="9" cy="9" r="6" fill="#fff" /></svg>
    </RecorderButton>
    <RecorderTime>01:52</RecorderTime>
    <RecorderButton $h={27} aria-label="Microphone">
      <svg width="14" height="18"><rect x="4" width="6" height="11" rx="3" fill="#fff" /><path d="M1 7c0 9 12 9 12 0M7 13v4M3 17h8" fill="none" stroke="#35d12f" strokeWidth="1.800" /></svg>
    </RecorderButton>
    <RecorderButton $h={25} aria-label="Sound">
      <svg width="18" height="14" fill="none" stroke="#ddd"><path d="M0 4h4l5-4v14l-5-4H0z" fill="#fff" stroke="none" /><path d="M11 4.500c1 1.500 1 3.500 0 5M13 2.500c2 3 2 6 0 9M15 .5c3 4 3 9 0 13" /></svg>
    </RecorderButton>
    <RecorderButton aria-label="Webcam">
      <svg width="18" height="18"><circle cx="8" cy="8" r="6.500" fill="none" stroke="#999" strokeWidth="2" /><circle cx="8" cy="8" r="2.500" fill="none" stroke="#999" strokeWidth="1.500" /><path d="M3 16.500h9" stroke="#999" strokeWidth="2" /><path d="M10 10h7v7h-7z" fill="#e0262b" /><path d="M12 12l3 3M15 12l-3 3" stroke="#fff" /></svg>
    </RecorderButton>
    <RecorderLine />
    <RecorderButton $h={32} aria-label="Windows">
      <svg width="18" height="17"><path d="M0 0h15v3H3v10H0z" fill="#ccc" /><path d="M3 4h15v13H3z" fill="#fff" /></svg>
    </RecorderButton>
    <RecorderButton $h={22} aria-label="Settings"><GearIcon /></RecorderButton>
  </Recorder>
);

export default function App() {
  return (
    <Fragment>
      <GlobalStyle />
      <Window>
        <Head />
        <RibbonBar />
        <FormulaBar />
        <Sheet />
        <SheetTabs />
        <Status />
        <TaskbarRow />
        <RecorderPanel />
      </Window>
    </Fragment>
  );
}
